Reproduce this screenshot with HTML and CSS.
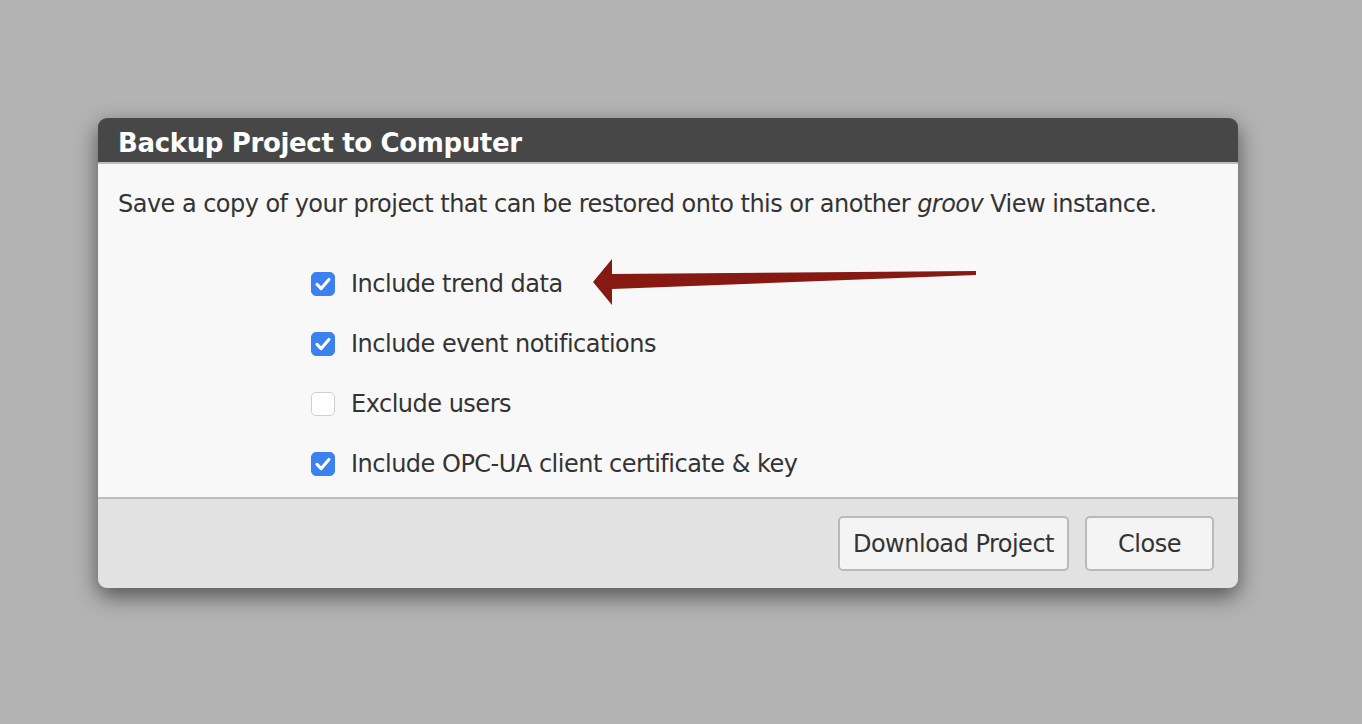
FILE: index.html
```html
<!DOCTYPE html>
<html lang="en">
<head>
  <meta charset="UTF-8">
  <title>Backup Project to Computer</title>
  <link rel="stylesheet" href="styles.css">
</head>
<body>
  <div class="dialog">
    <div class="dialog-header">Backup Project to Computer</div>
    <div class="dialog-body">
      <p class="intro">Save a copy of your project that can be restored onto this or another <em>groov</em> View instance.</p>
      <div class="options">
        <label class="option">
          <span class="check on"><svg viewBox="0 0 24 24"><path d="M5.5 12.5l4.5 4.5 8.5-10" /></svg></span>
          Include trend data
          <svg class="arrow" viewBox="0 0 390 50" width="390" height="50"><polygon points="1,24 20,1 20,16 384,13 384,17 20,31 20,47" /></svg>
        </label>
        <label class="option">
          <span class="check on"><svg viewBox="0 0 24 24"><path d="M5.5 12.5l4.5 4.5 8.5-10" /></svg></span>
          Include event notifications
        </label>
        <label class="option">
          <span class="check"></span>
          Exclude users
        </label>
        <label class="option">
          <span class="check on"><svg viewBox="0 0 24 24"><path d="M5.5 12.5l4.5 4.5 8.5-10" /></svg></span>
          Include OPC-UA client certificate &amp; key
        </label>
      </div>
    </div>
    <div class="dialog-footer">
      <button class="btn">Download Project</button>
      <button class="btn btn-close">Close</button>
    </div>
  </div>
</body>
</html>
```

FILE: styles.css
```css
body { margin: 0; background-color: #b3b3b3; font-family: "DejaVu Sans", Verdana, sans-serif; color: #333; height: 724px; }
.dialog { position: relative; top: 118px; margin-left: 98px; width: 1140px; border-radius: 9px; overflow: hidden; box-shadow: 0 8px 22px rgba(0, 0, 0, 0.55); }
.dialog-header { background-color: #474747; color: #fff; font-weight: bold; font-size: 26px; letter-spacing: -0.35px; height: 44px; line-height: 50px; padding-left: 20px; border-bottom: 2px solid #bdbdbd; }
.dialog-body { background-color: #f8f8f8; padding: 24px 20px 0; height: 309px; border-bottom: 2px solid #bdbdbd; }
.intro { margin: 0; font-size: 24px; letter-spacing: -0.53px; line-height: 32px; }
.intro em { font-style: italic; }
.options { margin-top: 34px; padding-left: 193px; }
.option { position: relative; display: flex; align-items: center; gap: 16px; height: 60px; font-size: 24px; letter-spacing: -0.5px; }
.check { width: 24px; height: 24px; border-radius: 5px; box-sizing: border-box; border: 1px solid #cfcfcf; background-color: #fff; display: flex; align-items: center; justify-content: center; }
.check.on { background-color: #3b82f0; border-color: #3b82f0; }
.check svg { width: 22px; height: 22px; fill: none; stroke: #fff; stroke-width: 3.4; stroke-linecap: round; stroke-linejoin: round; }
.arrow { position: absolute; left: 281px; top: 4px; fill: #861a12; }
.dialog-footer { background-color: #e2e2e2; height: 89px; display: flex; justify-content: flex-end; align-items: center; gap: 16px; padding-right: 24px; }
.btn { font-family: inherit; font-size: 24px; letter-spacing: -0.5px; color: #333; background-color: #f4f4f4; border: 2px solid #b9b9b9; border-radius: 5px; height: 55px; padding: 0 13px; }
.btn-close { width: 129px; }
```
